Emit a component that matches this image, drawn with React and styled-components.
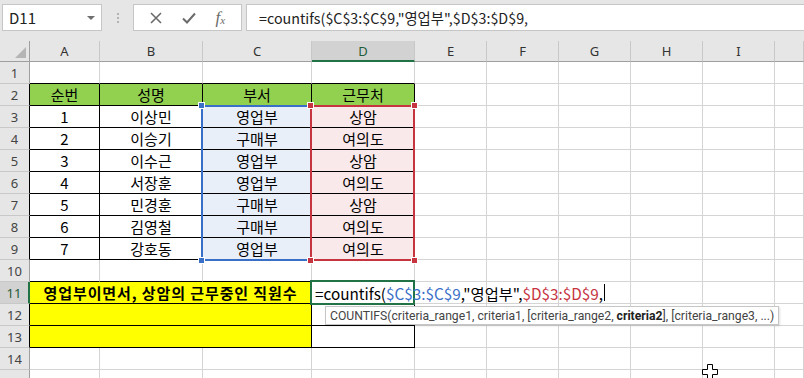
import React from 'react';
import styled, { createGlobalStyle } from 'styled-components';

const GlobalStyle = createGlobalStyle`
  html, body { margin: 0; padding: 0; background: #fff; }
  body { font-family: "Noto Sans CJK KR", "Noto Sans", sans-serif; }
`;

const KR = '"Noto Sans CJK KR", "Noto Sans", sans-serif';
const UI = '"Noto Sans", "Noto Sans CJK KR", sans-serif';

const Window = styled.div`
  width: 804px;
  height: 378px;
  overflow: hidden;
  display: flex;
  flex-direction: column;
  background: #fff;
`;

const TopBar = styled.div`
  flex: none;
  height: 41px;
  box-sizing: border-box;
  background: #e6e6e6;
  display: flex;
  align-items: flex-start;
  padding: 4px 0 0 2px;
`;

const Field = styled.div`
  height: 27px;
  box-sizing: border-box;
  background: #fff;
  border: 1px solid #c6c6c6;
  display: flex;
  align-items: center;
  font-family: ${KR};
  font-size: 15px;
  color: #222;
`;

const NameBox = styled(Field)`
  width: 100px;
  padding: 0 6px 0 6px;
  justify-content: space-between;
`;

const Caret = styled.span`
  width: 0;
  height: 0;
  border-left: 4px solid transparent;
  border-right: 4px solid transparent;
  border-top: 4px solid #6f6f6f;
`;

const Grip = styled.div`
  width: 31px;
  height: 27px;
  display: flex;
  flex-direction: column;
  align-items: center;
  justify-content: center;
  gap: 2px;
  span {
    width: 2px;
    height: 2px;
    background: #b3b3b3;
  }
`;

const FxBox = styled(Field)`
  width: 109px;
  justify-content: space-around;
  padding: 0 6px;
`;

const Fx = styled.span`
  font-family: "Liberation Serif", serif;
  font-style: italic;
  color: #6b6b6b;
  font-size: 17px;
  line-height: 1;
  sub {
    font-size: 11px;
    vertical-align: -1px;
  }
`;

const FormulaField = styled(Field)`
  flex: 1;
  margin-left: 4px;
  margin-right: -1px;
  padding-left: 12px;
  font-size: 14.3px;
  white-space: nowrap;
`;

const Sheet = styled.div`
  position: relative;
  display: grid;
  grid-template-columns: 30px 70px 103px 109px 103px 72px 72px 72px 72px 72px 1fr;
  grid-template-rows: 21px repeat(15, 22px);
`;

const Corner = styled.div`
  position: relative;
  background: #e6e6e6;
  border-right: 1px solid #9f9f9f;
  border-bottom: 1px solid #9f9f9f;
  &::after {
    content: '';
    position: absolute;
    right: 3px;
    bottom: 3px;
    width: 0;
    height: 0;
    border-left: 11px solid transparent;
    border-bottom: 11px solid #b5b5b5;
  }
`;

const ColHead = styled.div`
  box-sizing: border-box;
  background: ${(p) => (p.$sel ? '#d2d2d2' : '#e6e6e6')};
  border-right: 1px solid #c8c8c8;
  border-bottom: ${(p) => (p.$sel ? '2px solid #217346' : '1px solid #9f9f9f')};
  display: flex;
  align-items: center;
  justify-content: center;
  font-family: ${UI};
  font-size: 13px;
  color: ${(p) => (p.$sel ? '#1f5c38' : '#333')};
`;

const RowHead = styled.div`
  box-sizing: border-box;
  background: ${(p) => (p.$sel ? '#d2d2d2' : '#e6e6e6')};
  border-right: ${(p) => (p.$sel ? '2px solid #217346' : `1px solid ${p.$edge || '#9f9f9f'}`)};
  border-bottom: 1px solid #c8c8c8;
  display: flex;
  align-items: center;
  justify-content: center;
  font-family: ${UI};
  font-size: 13px;
  color: ${(p) => (p.$sel ? '#1f5c38' : '#444')};
`;

const Cell = styled.div`
  position: relative;
  box-sizing: border-box;
  grid-column: span ${(p) => p.$span || 1};
  background: ${(p) => p.$bg || '#fff'};
  border-right: 1px solid ${(p) => p.$br || '#d4d4d4'};
  border-bottom: 1px solid ${(p) => p.$bb || '#d4d4d4'};
  display: flex;
  align-items: center;
  justify-content: center;
  font-family: ${KR};
  font-size: 15px;
  font-weight: ${(p) => (p.$bold ? 700 : 400)};
  letter-spacing: ${(p) => (p.$bold ? '0.9px' : '0')};
  color: #000;
  white-space: nowrap;
`;

const ActiveBox = styled.div`
  position: absolute;
  left: -2px;
  top: -2px;
  right: -1px;
  bottom: -2px;
  border: 2px solid #217346;
  z-index: 3;
  pointer-events: none;
`;

const Editor = styled.span`
  position: absolute;
  left: 3px;
  top: 50%;
  transform: translateY(-50%);
  z-index: 4;
  font-family: ${KR};
  font-size: 15.3px;
  color: #000;
  white-space: nowrap;
  display: flex;
  align-items: center;
`;

const Ref = styled.span`
  color: ${(p) => p.$c};
`;

const Caret2 = styled.span`
  display: inline-block;
  width: 1px;
  height: 17px;
  background: #000;
  margin-left: 1px;
`;

const RangeBox = styled.div`
  position: absolute;
  left: ${(p) => p.$x}px;
  top: ${(p) => p.$y}px;
  width: ${(p) => p.$w}px;
  height: ${(p) => p.$h}px;
  box-sizing: border-box;
  border: 2px solid ${(p) => p.$c};
  z-index: 2;
  pointer-events: none;
`;

const Handle = styled.span`
  position: absolute;
  width: 7px;
  height: 7px;
  box-sizing: border-box;
  border: 1px solid #fff;
  background: ${(p) => p.$c};
  ${(p) => (p.$t ? 'top: -5px;' : 'bottom: -5px;')}
  ${(p) => (p.$l ? 'left: -5px;' : 'right: -5px;')}
`;

const Tooltip = styled.div`
  position: absolute;
  left: 325px;
  top: 265px;
  height: 19px;
  box-sizing: border-box;
  padding: 0 4px;
  background: #fff;
  border: 1px solid #c6c6c6;
  box-shadow: 1px 1px 2px rgba(0, 0, 0, 0.12);
  display: flex;
  align-items: center;
  font-family: Roboto, "Noto Sans", sans-serif;
  font-size: 12.2px;
  color: #444;
  white-space: nowrap;
  z-index: 5;
  b {
    color: #222;
    font-weight: 700;
  }
`;

const Pointer = styled.svg`
  position: absolute;
  left: 702px;
  top: 323px;
  z-index: 6;
`;

const COLS = ['A', 'B', 'C', 'D', 'E', 'F', 'G', 'H', 'I', 'J'];
const DATA = [
  ['1', '이상민', '영업부', '상암'],
  ['2', '이승기', '구매부', '여의도'],
  ['3', '이수근', '영업부', '상암'],
  ['4', '서장훈', '영업부', '여의도'],
  ['5', '민경훈', '구매부', '상암'],
  ['6', '김영철', '구매부', '여의도'],
  ['7', '강호동', '영업부', '여의도'],
];
const BLACK = '#000';
const BLUE = '#3a6fc8';
const RED = '#c6343f';

function renderRow(r) {
  const cells = [];
  const edge = (r >= 2 && r <= 9) || (r >= 12 && r <= 13) ? BLACK : undefined;
  cells.push(
    <RowHead key={`h${r}`} $sel={r === 11} $edge={edge}>
      {r <= 14 ? r : ''}
    </RowHead>
  );
  if (r >= 11 && r <= 13) {
    cells.push(
      <Cell key={`m${r}`} $span={3} $bg="#ffff00" $br={BLACK} $bb={BLACK} $bold>
        {r === 11 ? '영업부이면서, 상암의 근무중인 직원수' : ''}
      </Cell>
    );
    cells.push(
      <Cell key={`d${r}`} $br={BLACK} $bb={BLACK}>
        {r === 11 && (
          <>
            <ActiveBox />
            <Editor>
              =countifs(<Ref $c={BLUE}>$C$3:$C$9</Ref>,"영업부",<Ref $c={RED}>$D$3:$D$9</Ref>,
              <Caret2 />
            </Editor>
          </>
        )}
      </Cell>
    );
    for (let c = 4; c < COLS.length; c++) cells.push(<Cell key={`c${r}${c}`} />);
    return cells;
  }
  for (let c = 0; c < COLS.length; c++) {
    let props = {};
    let text = '';
    if (c < 4) {
      if (r === 1 || r === 10) props = { $bb: BLACK };
      if (r === 2) {
        props = { $bg: '#92d050', $br: BLACK, $bb: BLACK };
        text = ['순번', '성명', '부서', '근무처'][c];
      }
      if (r >= 3 && r <= 9) {
        const bg = c === 2 ? '#e9eff9' : c === 3 ? '#f9e9ea' : '#fff';
        props = { $bg: bg, $br: BLACK, $bb: BLACK };
        text = DATA[r - 3][c];
      }
    }
    cells.push(
      <Cell key={`c${r}${c}`} {...props}>
        {text}
      </Cell>
    );
  }
  return cells;
}

export default function App() {
  const rows = [];
  for (let r = 1; r <= 15; r++) rows.push(...renderRow(r));
  return (
    <>
      <GlobalStyle />
      <Window>
        <TopBar>
          <NameBox>
            D11
            <Caret />
          </NameBox>
          <Grip>
            <span />
            <span />
            <span />
          </Grip>
          <FxBox>
            <svg width="12" height="12" viewBox="0 0 12 12">
              <path d="M1 1 L11 11 M11 1 L1 11" stroke="#6b6b6b" strokeWidth="1.6" fill="none" />
            </svg>
            <svg width="14" height="12" viewBox="0 0 14 12">
              <path d="M1 6.5 L5 10.5 L13 1.5" stroke="#6b6b6b" strokeWidth="2" fill="none" />
            </svg>
            <Fx>
              f<sub>x</sub>
            </Fx>
          </FxBox>
          <FormulaField>=countifs($C$3:$C$9,"영업부",$D$3:$D$9,</FormulaField>
        </TopBar>
        <Sheet>
          <Corner />
          {COLS.map((c) => (
            <ColHead key={c} $sel={c === 'D'}>
              {c === 'J' ? '' : c}
            </ColHead>
          ))}
          {rows}
          <RangeBox $x={201} $y={64} $w={111} $h={156} $c={BLUE}>
            <Handle $c={BLUE} $t $l />
            <Handle $c={BLUE} $l />
          </RangeBox>
          <RangeBox $x={310} $y={64} $w={105} $h={156} $c={RED}>
            <Handle $c={RED} $t $l />
            <Handle $c={RED} $t />
            <Handle $c={RED} $l />
            <Handle $c={RED} />
          </RangeBox>
          <Tooltip>
            COUNTIFS(criteria_range1, criteria1, [criteria_range2,&nbsp;<b>criteria2</b>], [criteria_range3, ...)
          </Tooltip>
          <Pointer width="16" height="16" viewBox="0 0 16 16">
            <path
              d="M5.5 0.5 H10.5 V5.5 H15.5 V10.5 H10.5 V15.5 H5.5 V10.5 H0.5 V5.5 H5.5 Z"
              fill="#fff"
              stroke="#000"
              strokeWidth="1"
            />
          </Pointer>
        </Sheet>
      </Window>
    </>
  );
}
